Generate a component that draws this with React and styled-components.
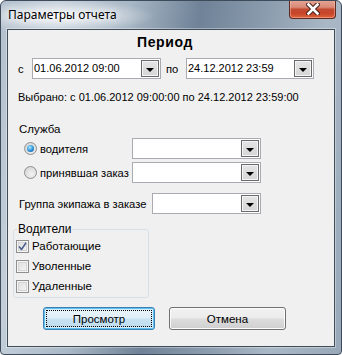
import React from 'react';
import styled, { createGlobalStyle } from 'styled-components';

const Global = createGlobalStyle`
  html, body { margin: 0; padding: 0; background: #fff; overflow: hidden; }
  body { font-family: "Liberation Sans", Arial, sans-serif; font-size: 11px; color: #000; }
`;

const Window = styled.div`
  width: 342px;
  height: 355px;
  box-sizing: border-box;
  border: 1px solid #3e4b5a;
  border-radius: 6px 6px 4px 4px;
  display: flex;
  flex-direction: column;
  background:
    radial-gradient(ellipse 95px 16px at 60px 15px, rgba(255,255,255,0.85), rgba(255,255,255,0) 100%),
    linear-gradient(100deg, #b3c0cd 0%, #c3ced9 14%, #a9b8c6 32%, #6f8297 50%, #8a9bad 66%, #aab8c6 82%, #98a8b8 100%);
  overflow: hidden;
`;

const TitleBar = styled.div`
  height: 28px;
  flex: none;
  display: flex;
  align-items: flex-start;
  justify-content: space-between;
`;

const Title = styled.div`
  font-family: "Noto Sans", "Open Sans", sans-serif;
  font-size: 12px;
  line-height: 16px;
  margin: 6px 0 0 7px;
  color: #000;
  text-shadow: 0 0 6px #fff, 0 0 10px #fff;
`;

const CloseButton = styled.div`
  width: 47px;
  height: 19px;
  box-sizing: border-box;
  margin: -1px 5px 0 0;
  border: 1px solid #5e2b22;
  border-top: none;
  border-radius: 0 0 4px 4px;
  background: linear-gradient(#e6a898 0%, #d98a77 40%, #c24a30 52%, #c7452a 75%, #e0643c 100%);
  box-shadow: inset 0 0 0 1px rgba(255,200,180,0.45);
  display: flex;
  align-items: center;
  justify-content: center;
`;

const Frame = styled.div`
  flex: 1;
  display: flex;
  padding: 0 6px 7px;
`;

const Client = styled.div`
  flex: 1;
  background: #f0f0f0;
  border: 1px solid #414c59;
  box-shadow: 0 0 0 1px rgba(255,255,255,0.35);
  display: flex;
  flex-direction: column;
  padding-top: 4px;
`;

const Heading = styled.div`
  height: 16px;
  line-height: 16px;
  text-align: center;
  padding-right: 12px;
  font-size: 14px;
  font-weight: bold;
  letter-spacing: 0.6px;
`;

const Row = styled.div`
  display: flex;
  align-items: center;
  height: 21px;
  margin-top: ${p => p.mt || 0}px;
  padding-left: ${p => p.pl || 0}px;
  font-size: 11.2px;
`;

const Label = styled.span`
  width: ${p => p.w}px;
  flex: none;
  margin-left: ${p => p.ml || 0}px;
  white-space: nowrap;
`;

const Combo = styled.div`
  width: ${p => p.w}px;
  height: 21px;
  box-sizing: border-box;
  border: 1px solid #a9abb0;
  background: #fff;
  display: flex;
  align-items: center;
  justify-content: space-between;
  flex: none;
`;

const ComboText = styled.span`
  padding-left: 1px;
  margin-top: -2px;
  font-size: 11px;
`;

const DropButton = styled.div`
  width: 18px;
  height: 17px;
  box-sizing: border-box;
  margin-right: 1px;
  border: 1px solid #6a6a6a;
  background: linear-gradient(#e4e4e4, #d6d6d6);
  box-shadow: inset 0 0 0 1px #f4f4f4;
  display: flex;
  align-items: center;
  justify-content: center;
  padding-top: 2px;
`;

const Arrow = styled.span`
  width: 0;
  height: 0;
  border-left: 4px solid transparent;
  border-right: 4px solid transparent;
  border-top: 4px solid #000;
`;

const TextLine = styled.div`
  line-height: 13px;
  margin-top: ${p => p.mt}px;
  padding-left: ${p => p.pl}px;
  font-size: ${p => p.fs || 11}px;
`;

const Radio = styled.span`
  width: 13px;
  height: 13px;
  box-sizing: border-box;
  border-radius: 50%;
  border: 1px solid #8e8f8f;
  background: radial-gradient(circle at 60% 65%, #f2f2f2, #cfcfcf);
  display: flex;
  align-items: center;
  justify-content: center;
  flex: none;
  &::after {
    content: '';
    display: ${p => (p.checked ? 'block' : 'none')};
    width: 7px;
    height: 7px;
    border-radius: 50%;
    background: radial-gradient(circle at 40% 35%, #a9ecff 0%, #2c8fd6 55%, #0d4f9a 100%);
  }
`;

const GroupBox = styled.fieldset`
  width: 136px;
  box-sizing: border-box;
  margin: 9px 0 0 5px;
  padding: 0 2px 1px;
  border: 1px solid #d5dfe5;
  border-radius: 3px;
  font-size: 11.5px;
`;

const Legend = styled.legend`
  padding: 0 1px;
  margin-left: 1px;
  line-height: 13px;
  font-size: 12px;
`;

const CheckRow = styled.div`
  display: flex;
  align-items: center;
  height: 20px;
`;

const Check = styled.span`
  width: 13px;
  height: 13px;
  box-sizing: border-box;
  border: 1px solid #8f8f8f;
  background: linear-gradient(135deg, #dcdcdc, #f6f6f6);
  box-shadow: inset 0 0 0 1px #f4f4f4, inset 0 0 0 2px #d4d4d4;
  margin-right: 3px;
  display: flex;
  align-items: center;
  justify-content: center;
  flex: none;
`;

const Buttons = styled.div`
  display: flex;
  gap: 14px;
  margin: 9px 0 0 35px;
  font-size: 11.5px;
`;

const Button = styled.div`
  width: ${p => p.w}px;
  height: 23px;
  box-sizing: border-box;
  border: 1px solid ${p => (p.focused ? '#3c7fb1' : '#707070')};
  border-radius: 3px;
  background: ${p =>
    p.focused
      ? 'linear-gradient(#eaf4fa 0%, #dfeef7 48%, #c8e3f2 52%, #bcdcee 100%)'
      : 'linear-gradient(#f2f2f2 0%, #ebebeb 48%, #dddddd 52%, #cfcfcf 100%)'};
  box-shadow: ${p =>
    p.focused ? '0 0 0 1px #5cc1f0 inset, inset 0 0 0 2px #d8eef9' : 'inset 0 0 0 1px #fcfcfc'};
  display: flex;
  align-items: center;
  justify-content: center;
  padding: 2px;
`;

const Focus = styled.div`
  flex: 1;
  align-self: stretch;
  border: 1px dotted #000;
  display: flex;
  align-items: center;
  justify-content: center;
`;

const ComboBox = ({ w, value }) => (
  <Combo w={w}>
    <ComboText>{value}</ComboText>
    <DropButton><Arrow /></DropButton>
  </Combo>
);

const CheckMark = () => (
  <svg width="9" height="9" viewBox="0 0 9 9">
    <path d="M1 4.5 L3.5 7.5 L8 0.8" fill="none" stroke="#4d6290" strokeWidth="1.6" strokeLinejoin="round" />
  </svg>
);

const CloseGlyph = () => (
  <svg width="14" height="12" viewBox="0 0 14 12">
    <path d="M2.5 1.5 L11.5 10.5 M11.5 1.5 L2.5 10.5" stroke="#4a2018" strokeWidth="4.6" strokeLinecap="square" />
    <path d="M2.5 1.5 L11.5 10.5 M11.5 1.5 L2.5 10.5" stroke="#fff" strokeWidth="2.6" strokeLinecap="square" />
  </svg>
);

export default function App() {
  return (
    <>
      <Global />
      <Window>
        <TitleBar>
          <Title>Параметры отчета</Title>
          <CloseButton><CloseGlyph /></CloseButton>
        </TitleBar>
        <Frame>
          <Client>
            <Heading>Период</Heading>
            <Row mt={8} pl={10}>
              <Label w={14}>с</Label>
              <ComboBox w={129} value="01.06.2012 09:00" />
              <Label w={20} ml={5}>по</Label>
              <ComboBox w={128} value="24.12.2012 23:59" />
            </Row>
            <TextLine mt={12} pl={10}>Выбрано: с 01.06.2012 09:00:00 по 24.12.2012 23:59:00</TextLine>
            <TextLine mt={19} pl={11} fs={11.5}>Служба</TextLine>
            <Row mt={2} pl={16}>
              <Radio checked />
              <Label w={92} ml={3}>водителя</Label>
              <ComboBox w={129} />
            </Row>
            <Row mt={3} pl={16}>
              <Radio />
              <Label w={92} ml={3}>принявшая заказ</Label>
              <ComboBox w={129} />
            </Row>
            <Row mt={10} pl={11}>
              <Label w={133}>Группа экипажа в заказе</Label>
              <ComboBox w={109} />
            </Row>
            <GroupBox>
              <Legend>Водители</Legend>
              <CheckRow><Check><CheckMark /></Check>Работающие</CheckRow>
              <CheckRow><Check />Уволенные</CheckRow>
              <CheckRow><Check />Удаленные</CheckRow>
            </GroupBox>
            <Buttons>
              <Button w={112} focused><Focus>Просмотр</Focus></Button>
              <Button w={117}>Отмена</Button>
            </Buttons>
          </Client>
        </Frame>
      </Window>
    </>
  );
}
